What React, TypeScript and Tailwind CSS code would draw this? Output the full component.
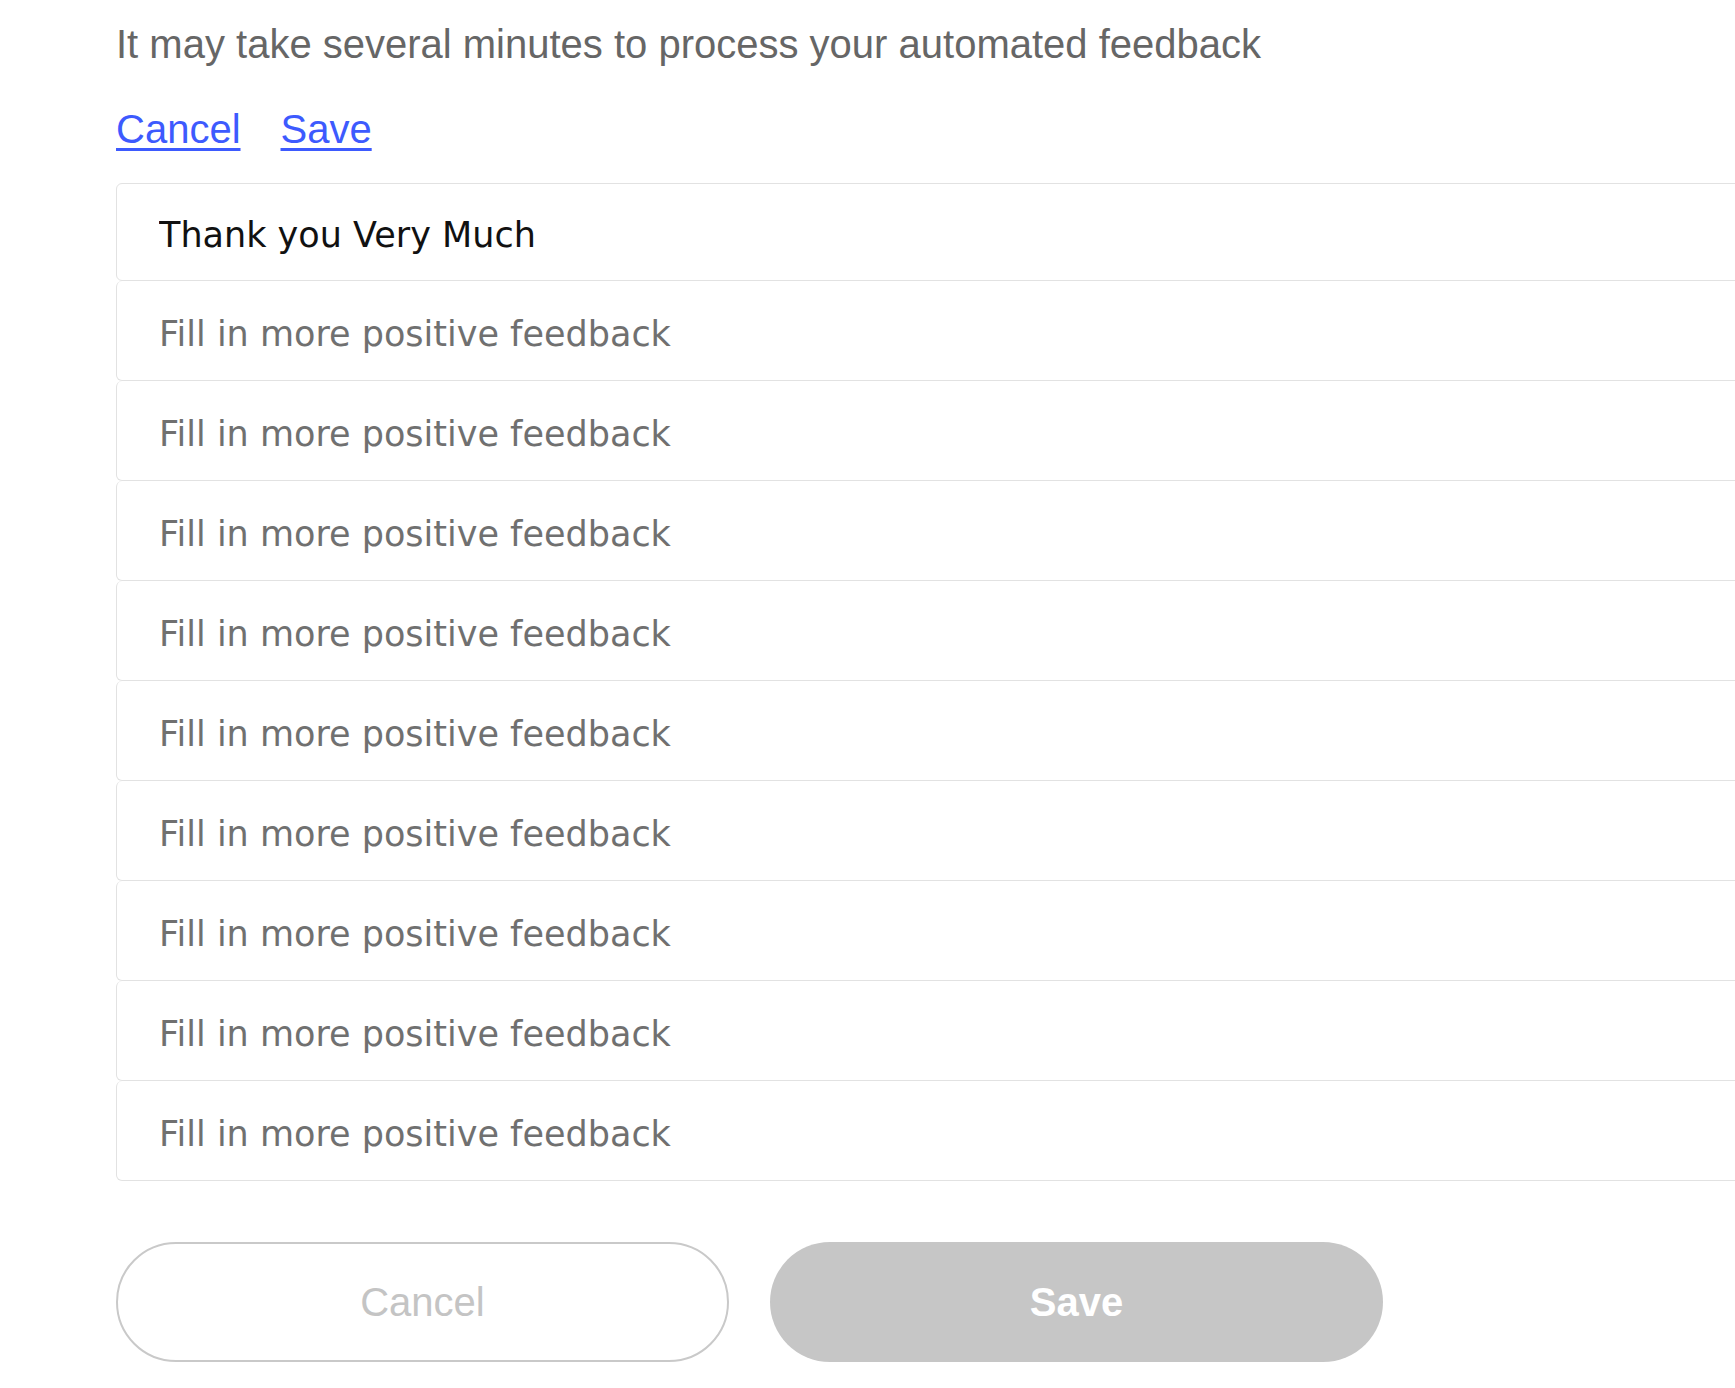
import { useState } from 'react'

const ROWS = 10

export default function App() {
  const [values, setValues] = useState<string[]>(() => {
    const arr = Array(ROWS).fill('')
    arr[0] = 'Thank you Very Much'
    return arr
  })

  const update = (i: number, v: string) => {
    setValues((prev) => prev.map((x, j) => (j === i ? v : x)))
  }

  return (
    <div className="min-h-screen bg-white overflow-hidden pl-[116px] font-['Liberation_Sans',Arial,sans-serif]">
      <p className="pt-[20px] text-[40px] leading-[48px] text-[#666666] whitespace-nowrap">
        It may take several minutes to process your automated feedback
      </p>

      {/* top links */}
      <div className="mt-[37px] flex gap-[40px] text-[40px] leading-[48px]">
        <a href="#" className="text-[#3d5afe] underline decoration-[3px] underline-offset-[5px]">Cancel</a>
        <a href="#" className="text-[#3d5afe] underline decoration-[3px] underline-offset-[5px]">Save</a>
      </div>

      {/* feedback inputs */}
      <div className="mt-[30px] w-[1700px] flex flex-col">
        {values.map((v, i) => (
          <input
            key={i}
            value={v}
            onChange={(e) => update(i, e.target.value)}
            placeholder="Fill in more positive feedback"
            className={`w-full ${i === 0 ? 'h-[98px] border' : 'h-[100px] border border-t-0'} border-[#e2e2e2] rounded-md bg-white pl-[42px] pt-[6px] font-['DejaVu_Sans',Verdana,sans-serif] text-[35px] text-[#111111] placeholder:text-[#707070] outline-none`}
          />
        ))}
      </div>

      {/* bottom buttons */}
      <div className="mt-[61px] flex gap-[41px]">
        <button className="w-[613px] h-[120px] rounded-full border-2 border-[#c9c9c9] bg-white text-[40px] text-[#c4c4c4]">
          Cancel
        </button>
        <button className="w-[613px] h-[120px] rounded-full bg-[#c6c6c6] text-[40px] font-bold text-white">
          Save
        </button>
      </div>
    </div>
  )
}
